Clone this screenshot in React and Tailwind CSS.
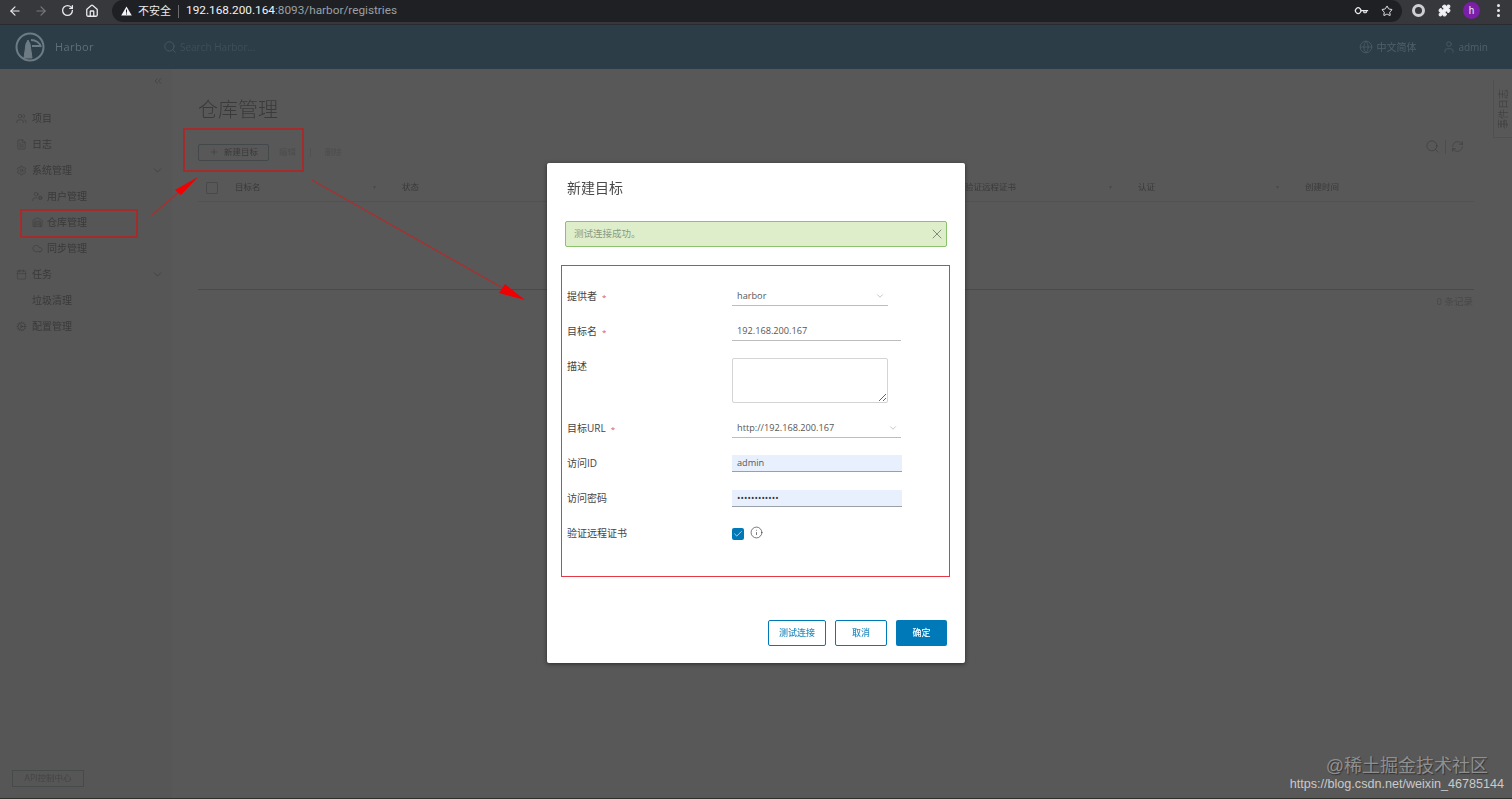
import { ArrowLeft, ArrowRight, RotateCw, Home, Star, Puzzle, Search, Globe, User, ChevronDown, ChevronsLeft, Plus, X, Info, Check, RefreshCw, Users, FileText, Settings, UserCog, Warehouse, Cloud, Calendar, Cog, Key } from 'lucide-react';

const CN = "font-['Open_Sans','Noto_Sans_CJK_SC',sans-serif]";

const navItems = [
    { label: '项目', icon: Users, top: true },
    { label: '日志', icon: FileText, top: true },
    { label: '系统管理', icon: Settings, top: true, caret: true },
    { label: '用户管理', icon: UserCog },
    { label: '仓库管理', icon: Warehouse },
    { label: '同步管理', icon: Cloud },
    { label: '任务', icon: Calendar, top: true, caret: true },
    { label: '垃圾清理', icon: null, top: true },
    { label: '配置管理', icon: Cog, top: true },
];

const columns = [
    { label: '目标名', width: 'w-[167px]', sort: true },
    { label: '状态', width: 'w-[563px]', sort: true },
    { label: '验证远程证书', width: 'w-[173px]', sort: true },
    { label: '认证', width: 'w-[167px]', sort: true },
    { label: '创建时间', width: 'flex-1' },
];

const ChromeBar = () => (
    <div className="h-[25px] shrink-0 flex items-start bg-[#37383b] text-[#e8eaed] border-b border-[#2a2b2e]">
        <div className="w-[112px] h-[21px] flex items-center pl-[2px]">
            <span className="w-[26px] flex justify-center"><ArrowLeft size={14} strokeWidth={2} /></span>
            <span className="w-[26px] flex justify-center"><ArrowRight size={14} strokeWidth={2} className="text-[#77797c]" /></span>
            <span className="w-[26px] flex justify-center"><RotateCw size={13} strokeWidth={2.4} /></span>
            <span className="w-[24px] flex justify-center"><Home size={14} strokeWidth={2.2} /></span>
        </div>
        <div className="w-[1290px] h-[22px] rounded-full bg-[#1f2023] flex items-center pl-[8px] pr-[9px]">
            <svg width="11" height="10" viewBox="0 0 11 10" className="ml-[1px]">
                <path d="M5.5 0.5 L10.8 9.6 H0.2 Z" fill="#f1f3f4" />
                <rect x="5" y="3.5" width="1" height="3.2" fill="#1f2023" />
                <rect x="5" y="7.5" width="1" height="1" fill="#1f2023" />
            </svg>
            <span className={`ml-[6px] text-[11px] text-[#e8eaed] ${CN}`}>不安全</span>
            <span className="ml-[7px] mr-[7px] h-[13px] w-px bg-[#6b6d70]" />
            <span className="text-[11.8px] font-['Roboto',sans-serif]">
                <span className="text-[#f1f3f4]">192.168.200.164</span>
                <span className="text-[#9aa0a6]">:8093/harbor/registries</span>
            </span>
            <div className="ml-auto flex items-center gap-[14px] text-[#e8eaed]">
                <Key size={12} strokeWidth={2.4} className="rotate-[45deg]" />
                <Star size={12} strokeWidth={2} />
            </div>
        </div>
        <div className="flex-1 h-[21px] flex items-center pl-[10px] text-[#e8eaed]">
            <span className="w-[13px] h-[13px] rounded-full border-[3.5px] border-[#cfd0d2]" />
            <Puzzle size={13} strokeWidth={2} fill="#f1f3f4" className="ml-[13px]" />
            <span className="ml-[12px] w-[17px] h-[17px] rounded-full bg-[#7a1fa8] flex items-center justify-center text-[10px] font-['Roboto',sans-serif]">h</span>
            <span className="ml-[17px] flex flex-col gap-[2.5px]">
                <span className="w-[2.5px] h-[2.5px] rounded-full bg-[#e8eaed]" />
                <span className="w-[2.5px] h-[2.5px] rounded-full bg-[#e8eaed]" />
                <span className="w-[2.5px] h-[2.5px] rounded-full bg-[#e8eaed]" />
            </span>
        </div>
    </div>
);

const Header = () => (
    <div className={`h-[44px] shrink-0 flex items-center bg-[#2c3d48] text-[#4e606a] pl-[15px] pr-[24px] blur-[0.7px] ${CN}`}>
        <svg width="30" height="30" viewBox="0 0 30 30" fill="none" stroke="#6d7c84" strokeWidth="2">
            <circle cx="15" cy="15" r="13.5" />
            <path d="M9 26 L11 12 H15 L17 26 Z M11 12 L13 8 L15 12" fill="#6d7c84" strokeWidth="1" />
            <path d="M16 8 C21 8 25 11 26 15 M17 14 H25" strokeWidth="1.8" />
        </svg>
        <span className="ml-[10px] text-[11px] tracking-[0.4px] text-[#5f6f78]">Harbor</span>
        <Search size={14} strokeWidth={1.4} className="ml-[69px] text-[#4a5c66]" />
        <span className="ml-[3px] text-[10px] text-[#3d4f5a]">Search Harbor...</span>
        <div className="ml-auto flex items-center text-[10px]">
            <Globe size={14} strokeWidth={1.2} />
            <span className="ml-[3px]">中文简体</span>
            <User size={14} strokeWidth={1.2} className="ml-[26px]" />
            <span className="ml-[2px]">admin</span>
        </div>
    </div>
);

const Sidebar = () => (
    <aside className={`w-[172px] shrink-0 flex flex-col bg-[#565656] text-[#3a3a3a] text-[10px] blur-[0.7px] ${CN}`}>
        <div className="h-[36px] shrink-0 flex justify-end pr-[8px] pt-[6px]">
            <ChevronsLeft size={12} strokeWidth={1.2} />
        </div>
        {navItems.map((item) => {
            const Icon = item.icon;
            return (
                <div key={item.label} className={`h-[26px] shrink-0 flex items-center ${item.top ? 'pl-[16px]' : 'pl-[32px]'}`}>
                    {Icon ? <Icon size={11} strokeWidth={1.2} className="shrink-0" /> : <span className="w-[11px]" />}
                    <span className={item.top ? 'ml-[5px]' : 'ml-[4px]'}>{item.label}</span>
                    {item.caret && <ChevronDown size={13} strokeWidth={1.2} className="ml-auto mr-[8px]" />}
                </div>
            );
        })}
        <div className="mt-auto mb-[11px] ml-[12px] w-[72px] h-[17px] border border-[#474a4a] flex items-center justify-center text-[8.5px] text-[#444]">
            API控制中心
        </div>
    </aside>
);

const RegistryPage = () => (
    <main className={`relative flex-1 bg-[#585858] text-[#3a3a3a] pl-[26px] pr-[38px] blur-[0.7px] ${CN}`}>
        <h1 className="mt-[27px] h-[28px] text-[20px] leading-[28px] font-light text-[#3a3a3a]">仓库管理</h1>
        <div className="mt-[19px] h-[18px] flex items-center">
            <div className="w-[71px] h-[17px] rounded-[2px] border border-[#43484a] flex items-center justify-center gap-[5px] text-[8.5px]">
                <Plus size={10} strokeWidth={1.2} />
                新建目标
            </div>
            <span className="ml-[10px] text-[8.5px] text-[#4d4d4d]">编辑</span>
            <span className="ml-[12px] text-[8.5px] text-[#4d4d4d]">|</span>
            <span className="ml-[12px] text-[8.5px] text-[#4d4d4d]">删除</span>
            <div className="ml-auto mr-[10px] flex items-center gap-[5px] -mt-[11px]">
                <Search size={15} strokeWidth={1} />
                <span className="w-px h-[14px] bg-[#4d4d4d]" />
                <RefreshCw size={13} strokeWidth={1} />
            </div>
        </div>
        <div className="mt-[13px] h-[116px] border-b border-[#4a4a4a] flex flex-col">
            <div className="h-[28px] border-b border-[#525252] flex items-center text-[8.5px]">
                <span className="w-[12px] h-[12px] ml-[8px] mr-[17px] border border-[#484848] rounded-[1px] shrink-0" />
                {columns.map((col) => (
                    <div key={col.label} className={`${col.width} shrink-0 flex items-center`}>
                        {col.label}
                        {col.sort && <span className="ml-auto mr-[26px] text-[6px] text-[#4a4a4a]">▾</span>}
                    </div>
                ))}
            </div>
        </div>
        <div className="mt-[5px] mr-[1px] text-right text-[9.5px] text-[#484848]">0 条记录</div>
        <div className="absolute right-0 top-[11px] w-[19px] h-[58px] border-l border-b border-[#505050] flex items-center justify-center">
            <span className="[writing-mode:vertical-rl] [text-orientation:sideways] rotate-180 text-[10px] text-[#424242]">事件日志</span>
        </div>
    </main>
);

const FormRow = ({ label, required, children }) => (
    <div className="flex h-[35px]">
        <div className="w-[165px] shrink-0 flex items-center h-[35px] text-[10px] text-[#444]">
            <span>{label}</span>
            {required && <span className="ml-[5px] text-[8px] text-[#d8556b]">*</span>}
        </div>
        <div className="flex-1 flex items-center h-[35px]">{children}</div>
    </div>
);

const TargetForm = () => (
    <div className="ml-[14px] mr-[15px] mt-[18px] h-[312px] border border-[#e63946] pl-[5px] pt-[13px]">
        <FormRow label="提供者" required>
            <div className="w-[156px] h-[18px] border-b border-[#bdbdbd] flex items-center justify-between pl-[5px] pr-[3px] text-[9.2px] text-[#565656]">
                harbor
                <ChevronDown size={10} strokeWidth={1} className="text-[#777]" />
            </div>
        </FormRow>
        <FormRow label="目标名" required>
            <div className="w-[169px] h-[18px] border-b border-[#bdbdbd] flex items-center pl-[5px] text-[9.2px] text-[#565656]">192.168.200.167</div>
        </FormRow>
        <div className="flex h-[62px]">
            <div className="w-[165px] shrink-0 pt-[10px] text-[10px] leading-[15px] text-[#444]">描述</div>
            <textarea readOnly className="mt-[9px] w-[156px] h-[45px] rounded-[2px] border border-[#d4d4d4] outline-none" />
        </div>
        <FormRow label="目标URL" required>
            <div className="w-[169px] h-[18px] border-b border-[#bdbdbd] flex items-center justify-between pl-[5px] pr-[3px] text-[9.2px] text-[#565656]">
                http://192.168.200.167
                <ChevronDown size={10} strokeWidth={1} className="text-[#777]" />
            </div>
        </FormRow>
        <FormRow label="访问ID">
            <div className="w-[170px] h-[17px] bg-[#e8f0fe] border-b border-[#9aa0a8] flex items-center pl-[5px] text-[9.2px] text-[#565656]">admin</div>
        </FormRow>
        <FormRow label="访问密码">
            <div className="w-[170px] h-[17px] bg-[#e8f0fe] border-b border-[#9aa0a8] flex items-center pl-[5px] text-[9px] tracking-[0.1px] text-[#333]">••••••••••••</div>
        </FormRow>
        <FormRow label="验证远程证书">
            <span className="w-[12px] h-[12px] rounded-[2px] bg-[#0079b8] flex items-center justify-center text-white">
                <Check size={10} strokeWidth={1.6} />
            </span>
            <Info size={13} strokeWidth={1.2} className="ml-[6px] -mt-[3px] text-[#333]" />
        </FormRow>
    </div>
);

const Dialog = () => (
    <div className={`absolute left-[547px] top-[163px] w-[418px] h-[500px] flex flex-col bg-white rounded-[2px] shadow-[0_1px_4px_rgba(0,0,0,0.5)] ${CN}`}>
        <h2 className="pl-[20px] pt-[14px] h-[58px] text-[14px] leading-[22px] font-normal text-[#4a4a4a] blur-[0.3px]">新建目标</h2>
        <div className="mx-[18px] h-[26px] shrink-0 rounded-[2px] border border-[#8cc26e] bg-[#dfeeca] flex items-center justify-between pl-[8px] pr-[1px] text-[9.5px] text-[#8a9a80]">
            测试连接成功。
            <X size={16} strokeWidth={1} className="text-[#4f5a52]" />
        </div>
        <TargetForm />
        <div className="mt-auto mb-[17px] flex justify-end pr-[18px] gap-[9px] text-[9px] font-medium blur-[0.2px]">
            <button className="w-[58px] h-[26px] rounded-[2px] border border-[#0079b8] text-[#2b8fc2]">测试连接</button>
            <button className="w-[52px] h-[26px] rounded-[2px] border border-[#0079b8] text-[#2b8fc2]">取消</button>
            <button className="w-[51px] h-[26px] rounded-[2px] bg-[#0079b8] text-white">确定</button>
        </div>
    </div>
);

// screenshot annotations, drawn on top of the page
const Annotations = () => (
    <>
        <div className="absolute left-[183px] top-[128px] w-[121px] h-[44px] border-2 border-[#a32c2c] blur-[0.3px]" />
        <div className="absolute left-[20px] top-[209px] w-[118px] h-[29px] border-2 border-[#a32c2c] blur-[0.3px]" />
        <svg className="absolute inset-0 pointer-events-none" width="1512" height="799">
            <line x1="152" y1="215" x2="186" y2="186" stroke="#a83030" strokeWidth="1.4" />
            <path d="M198 177 L175 190 L181 195 Z" fill="#f00000" />
            <line x1="312" y1="180" x2="508" y2="291" stroke="#a83030" strokeWidth="1.4" />
            <path d="M525 300 L499 293 L505 284 Z" fill="#f00000" />
        </svg>
    </>
);

const Watermark = () => (
    <div className="absolute right-[8px] bottom-[7px] flex flex-col items-end">
        <span className="mr-[16px] mb-[-2px] text-[18px] leading-[24px] text-[#8f8f8f] [text-shadow:1px_1px_1px_#333] font-['Liberation_Sans','Noto_Sans_CJK_SC',sans-serif]">@稀土掘金技术社区</span>
        <span className="text-[12.6px] leading-[16px] text-[#cacaca] font-['Liberation_Sans',sans-serif]">https://blog.csdn.net/weixin_46785144</span>
    </div>
);

const App = () => {
    return (
        <div className="relative w-[1512px] h-[799px] overflow-hidden flex flex-col bg-[#585858]">
            <ChromeBar />
            <Header />
            <div className="flex-1 flex min-h-0 border-b border-[#2f2f2a]">
                <Sidebar />
                <RegistryPage />
            </div>
            <Annotations />
            <Dialog />
            <Watermark />
        </div>
    );
};

export default App;
